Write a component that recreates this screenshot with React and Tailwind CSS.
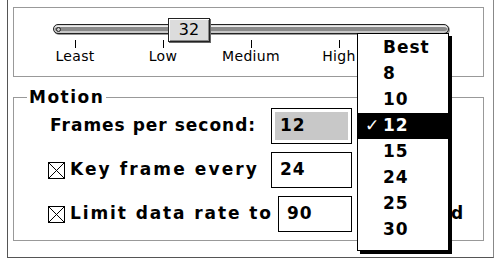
import React from 'react';

const FONT = { fontFamily: '"DejaVu Sans", "Liberation Sans", sans-serif' };

function CheckBox() {
  return (
    <svg width="17" height="17" viewBox="0 0 17 17" className="shrink-0">
      <rect x="0.5" y="0.5" width="16" height="16" fill="white" stroke="black" />
      <path d="M1 1 L16 16 M16 1 L1 16" stroke="black" strokeWidth="1" />
    </svg>
  );
}

function Field({ value, selected, className = '' }) {
  return (
    <div className={`h-[36px] border border-black bg-white p-[3px] ${className}`}>
      <div className={`h-full flex items-center pl-[5px] text-[17px] font-bold tracking-[1px] ${selected ? 'bg-[#c8c8c8]' : ''}`}>
        {value}
      </div>
    </div>
  );
}

const ticks = ['Least', 'Low', 'Medium', 'High'];
const rates = ['Best', '8', '10', '12', '15', '24', '25', '30'];

export default function App() {
  return (
    <div className="relative w-[498px] h-[259px] bg-white overflow-hidden text-black" style={FONT}>
      <div className="ml-[7px] w-[487px] h-[258px] border-x border-b border-l-[#555] border-r-[#888] border-b-[#555] pl-[5px] pt-[7px]">
        {/* quality slider */}
        <div className="w-[471px] h-[70px] border border-[#999] pt-[16px]">
          <div className="relative ml-[39px] w-[396px] h-[10px] rounded-full border border-[#222] bg-[#8a8a8a] shadow-[inset_0_1px_0_#d8d8d8,inset_0_2px_0_#eee,inset_0_-2px_0_#c8c8c8,1px_1px_0_#999] flex items-center pl-[2px]">
            <div className="w-[5px] h-[5px] rounded-full border border-[#222] bg-[#ccc]" />
            <div className="absolute left-[114px] -top-[7px] w-[42px] h-[24px] border border-[#222] bg-[#dcdcdc] shadow-[inset_1px_1px_0_#fff,inset_-1px_-1px_0_#888,1px_1px_0_#666] flex items-center justify-center text-[16px] leading-none">
              32
            </div>
          </div>
          <div className="ml-[17px] mt-[6px] grid grid-cols-[88px_88px_88px_88px]">
            {ticks.map((t) => (
              <div key={t} className="flex flex-col items-center">
                <div className="w-px h-[8px] bg-black" />
                <div className="text-[14px] leading-[16px] tracking-[0.3px]">{t}</div>
              </div>
            ))}
          </div>
        </div>

        {/* motion group */}
        <fieldset className="mt-[10px] w-[471px] h-[154px] border border-[#999]">
          <legend className="ml-[13px] px-[2px] text-[17px] leading-[20px] font-bold tracking-[1.5px]">Motion</legend>
          <div className="pl-[34px] pt-[1px] flex flex-col gap-[8px] text-[17px] font-bold">
            <div className="flex items-center">
              <div className="w-[223px] pl-[2px] whitespace-nowrap tracking-[1px]">Frames per second:</div>
              <Field value="12" selected className="w-[81px]" />
            </div>
            <div className="flex items-center">
              <div className="w-[223px] flex items-center gap-[5px] whitespace-nowrap">
                <CheckBox />
                <span className="tracking-[2.1px]">Key frame every</span>
              </div>
              <Field value="24" className="w-[81px]" />
            </div>
            <div className="flex items-center">
              <div className="w-[230px] flex items-center gap-[5px] whitespace-nowrap">
                <CheckBox />
                <span className="tracking-[1.9px]">Limit data rate to</span>
              </div>
              <Field value="90" className="w-[74px]" />
              <span className="ml-[17px] whitespace-nowrap tracking-[1px]">K/second</span>
            </div>
          </div>
        </fieldset>
      </div>

      {/* frame rate popup menu */}
      <div className="absolute left-[357px] top-[33px] w-[92px] border border-black bg-white pt-[1px] pb-[7px] shadow-[3px_3px_0_#000] text-[17px] font-bold tracking-[1px]">
        {rates.map((r) => (
          <div key={r} className={`h-[26px] flex items-center ${r === '12' ? 'bg-black text-white' : ''}`}>
            <span className="w-[25px] pl-[7px] font-normal">{r === '12' ? '✓' : ''}</span>
            <span>{r}</span>
          </div>
        ))}
      </div>
    </div>
  );
}
